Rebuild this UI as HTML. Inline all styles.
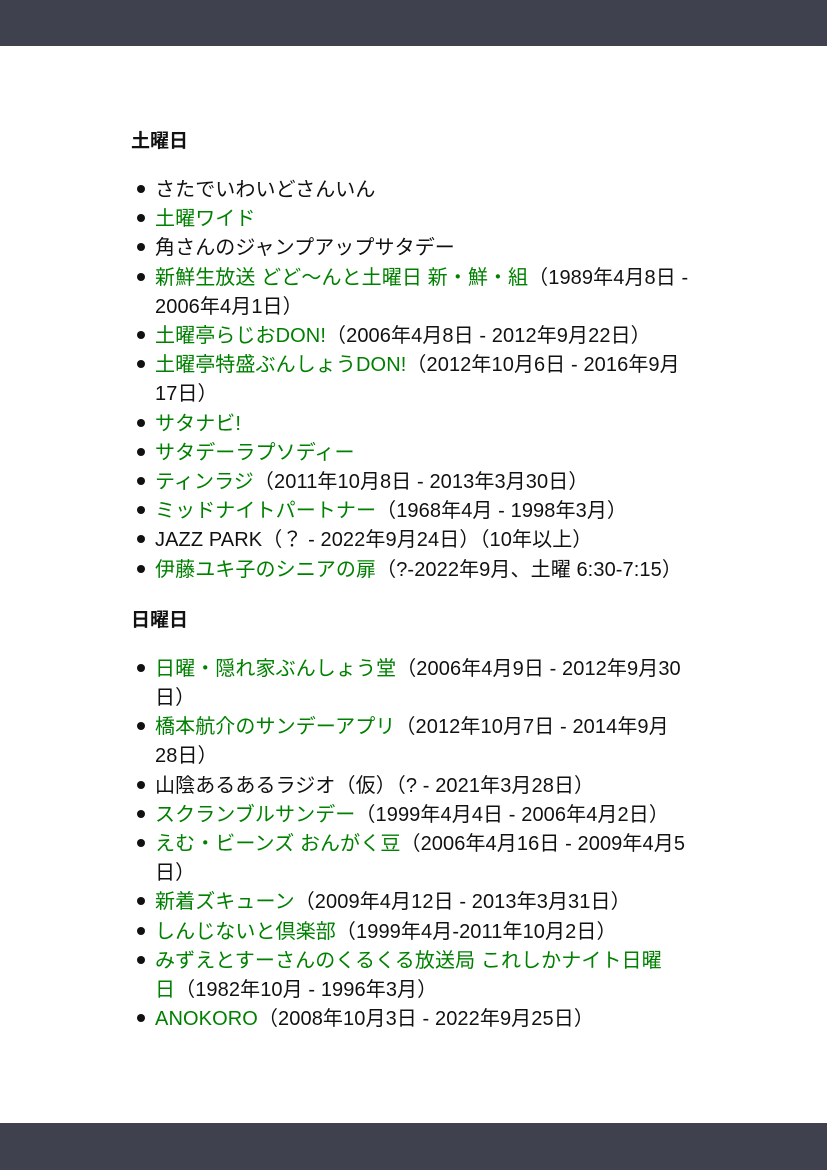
<!DOCTYPE html>
<html><head><meta charset="utf-8"><style>
body{margin:0;width:827px;height:1170px;background:#fff;position:relative;font-family:"Liberation Sans","Noto Sans CJK JP",sans-serif;color:#111;overflow:hidden}
.top{position:absolute;left:0;top:0;width:827px;height:46px;background:#3f424e}
.bot{position:absolute;left:0;top:1123px;width:827px;height:47px;background:#3f424e}
.c{position:absolute;left:131px;top:127px;width:640px}
h3{font-size:19px;font-weight:bold;margin:0;line-height:29px}
ul{margin:20px 0 21px 0;padding-left:24px;font-size:20px;line-height:29.2px;white-space:nowrap;letter-spacing:0.1px;list-style:none}
li{position:relative;height:auto}
li::before{content:"";position:absolute;left:-18px;top:9px;width:8px;height:8px;border-radius:50%;background:#111}
a{color:#008000;text-decoration:none}
</style></head><body>
<div class="top"></div>
<div class="c">
<h3>土曜日</h3>
<ul>
<li>さたでいわいどさんいん</li>
<li><a>土曜ワイド</a></li>
<li>角さんのジャンプアップサタデー</li>
<li><a>新鮮生放送 どど〜んと土曜日 新・鮮・組</a>（1989年4月8日 -<br>2006年4月1日）</li>
<li><a>土曜亭らじおDON!</a>（2006年4月8日 - 2012年9月22日）</li>
<li><a>土曜亭特盛ぶんしょうDON!</a>（2012年10月6日 - 2016年9月<br>17日）</li>
<li><a>サタナビ!</a></li>
<li><a>サタデーラプソディー</a></li>
<li><a>ティンラジ</a>（2011年10月8日 - 2013年3月30日）</li>
<li><a>ミッドナイトパートナー</a>（1968年4月 - 1998年3月）</li>
<li>JAZZ PARK（？ - 2022年9月24日）（10年以上）</li>
<li><a>伊藤ユキ子のシニアの扉</a>（?-2022年9月、土曜 6:30-7:15）</li>
</ul>
<h3>日曜日</h3>
<ul>
<li><a>日曜・隠れ家ぶんしょう堂</a>（2006年4月9日 - 2012年9月30<br>日）</li>
<li><a>橋本航介のサンデーアプリ</a>（2012年10月7日 - 2014年9月<br>28日）</li>
<li>山陰あるあるラジオ（仮）（? - 2021年3月28日）</li>
<li><a>スクランブルサンデー</a>（1999年4月4日 - 2006年4月2日）</li>
<li><a>えむ・ビーンズ おんがく豆</a>（2006年4月16日 - 2009年4月5<br>日）</li>
<li><a>新着ズキューン</a>（2009年4月12日 - 2013年3月31日）</li>
<li><a>しんじないと倶楽部</a>（1999年4月-2011年10月2日）</li>
<li><a>みずえとすーさんのくるくる放送局 これしかナイト日曜<br>日</a>（1982年10月 - 1996年3月）</li>
<li><a>ANOKORO</a>（2008年10月3日 - 2022年9月25日）</li>
</ul>
</div>
<div class="bot"></div>
</body></html>
